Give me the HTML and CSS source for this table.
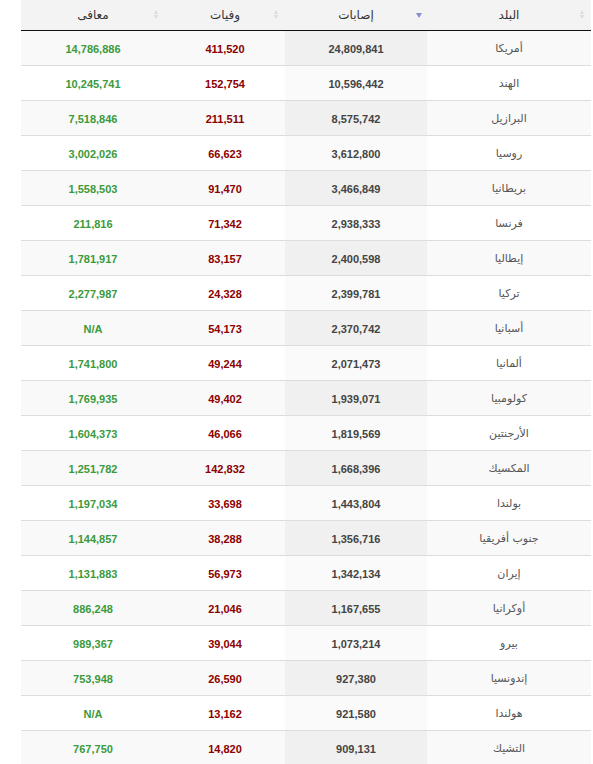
FILE: index.html
```html
<!DOCTYPE html>
<html lang="ar">
<head>
<meta charset="utf-8">
<link rel="stylesheet" href="styles.css">
</head>
<body>
<div class="wrap">
<table class="tbl" dir="rtl">
<thead>
<tr>
<th class="c-country">البلد<span class="sort both"></span></th>
<th class="c-cases">إصابات<span class="sort desc"></span></th>
<th class="c-deaths">وفيات<span class="sort both"></span></th>
<th class="c-rec">معافى<span class="sort both"></span></th>
</tr>
</thead>
<tbody>
<tr><td class="name">أمريكا</td><td class="cases">24,809,841</td><td class="deaths">411,520</td><td class="rec">14,786,886</td></tr>
<tr><td class="name">الهند</td><td class="cases">10,596,442</td><td class="deaths">152,754</td><td class="rec">10,245,741</td></tr>
<tr><td class="name">البرازيل</td><td class="cases">8,575,742</td><td class="deaths">211,511</td><td class="rec">7,518,846</td></tr>
<tr><td class="name">روسيا</td><td class="cases">3,612,800</td><td class="deaths">66,623</td><td class="rec">3,002,026</td></tr>
<tr><td class="name">بريطانيا</td><td class="cases">3,466,849</td><td class="deaths">91,470</td><td class="rec">1,558,503</td></tr>
<tr><td class="name">فرنسا</td><td class="cases">2,938,333</td><td class="deaths">71,342</td><td class="rec">211,816</td></tr>
<tr><td class="name">إيطاليا</td><td class="cases">2,400,598</td><td class="deaths">83,157</td><td class="rec">1,781,917</td></tr>
<tr><td class="name">تركيا</td><td class="cases">2,399,781</td><td class="deaths">24,328</td><td class="rec">2,277,987</td></tr>
<tr><td class="name">أسبانيا</td><td class="cases">2,370,742</td><td class="deaths">54,173</td><td class="rec">N/A</td></tr>
<tr><td class="name">ألمانيا</td><td class="cases">2,071,473</td><td class="deaths">49,244</td><td class="rec">1,741,800</td></tr>
<tr><td class="name">كولومبيا</td><td class="cases">1,939,071</td><td class="deaths">49,402</td><td class="rec">1,769,935</td></tr>
<tr><td class="name">الأرجنتين</td><td class="cases">1,819,569</td><td class="deaths">46,066</td><td class="rec">1,604,373</td></tr>
<tr><td class="name">المكسيك</td><td class="cases">1,668,396</td><td class="deaths">142,832</td><td class="rec">1,251,782</td></tr>
<tr><td class="name">بولندا</td><td class="cases">1,443,804</td><td class="deaths">33,698</td><td class="rec">1,197,034</td></tr>
<tr><td class="name">جنوب أفريقيا</td><td class="cases">1,356,716</td><td class="deaths">38,288</td><td class="rec">1,144,857</td></tr>
<tr><td class="name">إيران</td><td class="cases">1,342,134</td><td class="deaths">56,973</td><td class="rec">1,131,883</td></tr>
<tr><td class="name">أوكرانيا</td><td class="cases">1,167,655</td><td class="deaths">21,046</td><td class="rec">886,248</td></tr>
<tr><td class="name">بيرو</td><td class="cases">1,073,214</td><td class="deaths">39,044</td><td class="rec">989,367</td></tr>
<tr><td class="name">إندونسيا</td><td class="cases">927,380</td><td class="deaths">26,590</td><td class="rec">753,948</td></tr>
<tr><td class="name">هولندا</td><td class="cases">921,580</td><td class="deaths">13,162</td><td class="rec">N/A</td></tr>
<tr><td class="name">التشيك</td><td class="cases">909,131</td><td class="deaths">14,820</td><td class="rec">767,750</td></tr>
</tbody>
</table>
</div>
</body>
</html>
```
FILE: styles.css
```css
html, body {
  margin: 0;
  padding: 0;
  background: #fff;
}
.wrap {
  padding-left: 21px;
  width: 570px;
}
.tbl {
  width: 570px;
  border-collapse: collapse;
  table-layout: fixed;
  font-family: "Liberation Sans", Arial, "DejaVu Sans", sans-serif;
}
.tbl th {
  position: relative;
  height: 30px;
  padding: 0;
  background: #f3f3f3;
  border-bottom: 1px solid #111;
  font-family: "DejaVu Sans", sans-serif;
  font-weight: normal;
  font-size: 12px;
  color: #333;
  text-align: center;
}
.c-country { width: 164px; }
.c-cases { width: 142px; }
.c-deaths { width: 120px; }
.c-rec { width: 144px; }
.sort {
  position: absolute;
  right: 6px;
  top: 10px;
  width: 5px;
  height: 10px;
}
.sort.both::before, .sort.both::after {
  content: "";
  position: absolute;
  left: 0;
  border-left: 2.5px solid transparent;
  border-right: 2.5px solid transparent;
}
.sort.both::before {
  top: 0;
  border-bottom: 4px solid #dcdcdc;
}
.sort.both::after {
  top: 5px;
  border-top: 4px solid #dcdcdc;
}
.sort.desc::after {
  content: "";
  position: absolute;
  left: 0;
  top: 3px;
  border-left: 3px solid transparent;
  border-right: 3px solid transparent;
  border-top: 5px solid #8c8cd6;
}
.tbl td {
  height: 33px;
  padding: 1px 0 0;
  text-align: center;
  border-bottom: 1px solid #dddddd;
  font-size: 11px;
  font-weight: bold;
}
.tbl tbody tr:nth-child(odd) td { background: #f9f9f9; }
.tbl tbody tr:nth-child(even) td { background: #ffffff; }
.tbl tbody tr:nth-child(odd) td.cases { background: #f0f0f0; }
.tbl tbody tr:nth-child(even) td.cases { background: #fafafa; }
.name {
  font-family: "DejaVu Sans", sans-serif;
  font-weight: normal !important;
  font-size: 11px !important;
  color: #555;
}
.cases { color: #444; }
.deaths { color: #8b0000; }
.rec { color: #3c9a3c; }
```
